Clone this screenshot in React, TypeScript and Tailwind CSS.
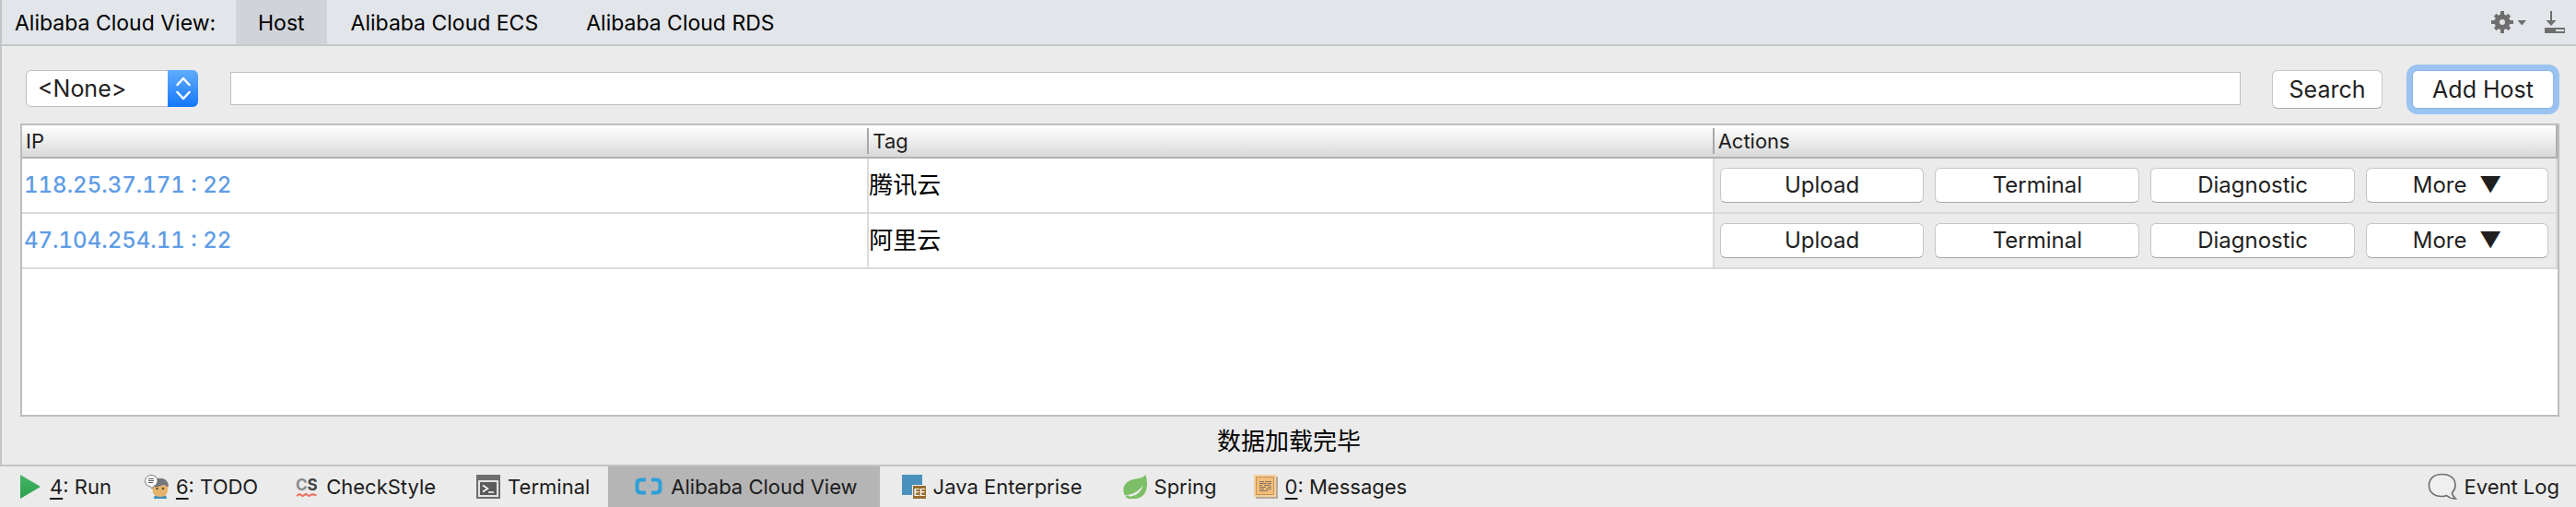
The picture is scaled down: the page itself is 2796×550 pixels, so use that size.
import React from "react";

const hosts = [
  { address: "118.25.37.171 : 22", tag: "腾讯云" },
  { address: "47.104.254.11 : 22", tag: "阿里云" },
];

const actions = ["Upload", "Terminal", "Diagnostic", "More \u00a0▼"];

const tabs = ["Host", "Alibaba Cloud ECS", "Alibaba Cloud RDS"];

function GearIcon() {
  return (
    <svg width="38" height="24" viewBox="0 0 38 24" fill="#6e6e6e" aria-hidden="true">
      <g transform="translate(12 12)">
        {[0, 45, 90, 135].map((angle) => (
          <rect key={angle} x="-2" y={angle % 90 ? "-11" : "-12"} width="4" height={angle % 90 ? "22" : "24"} transform={`rotate(${angle})`} />
        ))}
        <circle r="8.500" />
        <circle r="3" fill="#e2e5ea" />
      </g>
      <path d="M28.500 10h9.500l-4.750 5.500z" />
    </svg>
  );
}

function HideIcon() {
  return (
    <svg width="22" height="24" viewBox="0 0 22 24" fill="#6e6e6e" aria-hidden="true">
      <path d="M6 0h2v10h4.500l-5.500 6-5.500-6H6z" />
      <path fillRule="evenodd" d="M0 18h22v6H0zM12 20v2h9v-2z" />
    </svg>
  );
}

function RunIcon() {
  return (
    <svg width="26" height="26" viewBox="0 0 26 26" aria-hidden="true">
      <defs>
        <linearGradient id="run" x1="0" y1="0" x2="0" y2="1">
          <stop offset="0" stopColor="#43b566" />
          <stop offset="1" stopColor="#2b9f4d" />
        </linearGradient>
      </defs>
      <path d="M2 0L24 13L2 26z" fill="url(#run)" />
    </svg>
  );
}

function TodoIcon() {
  return (
    <svg width="26" height="26" viewBox="0 0 26 26" aria-hidden="true">
      <path d="M10 26c0-3 1.500-4 4-4h6c2.500 0 4 1 4 4z" fill="#3f8fb9" />
      <path d="M8.500 11.500h16.500v5c0 4.500-3 7.500-8 7.500s-8.500-3-8.500-7.500z" fill="#e6b36c" />
      <path d="M12 4.500c7-2.500 14 .5 14 8.500-1.500 0-3-1-4.500-2L12 13.500l-2-2z" fill="#75787a" />
      <circle cx="13.500" cy="15" r="1.200" fill="#5b4a34" />
      <circle cx="20" cy="15" r="1.200" fill="#5b4a34" />
      <path d="M7 .6c4.200 0 7 2.600 7 6 0 3.200-1.500 4.600-4 5.700L8 15l-1.800-2.300C2.600 12.500.6 10 .6 6.600S3.200.6 7 .6z" fill="#fff" stroke="#6e6e6e" />
      <path d="M4 4.500h6M4 6.500h6M4 8.500h5" stroke="#555" />
    </svg>
  );
}

function CheckStyleIcon() {
  return (
    <svg width="26" height="26" viewBox="0 0 26 26" aria-hidden="true">
      <text x="1" y="17" fontSize="17" fontWeight="700" className="font-[Inter]">
        <tspan fill="#8a8a8a">C</tspan>
        <tspan fill="#444">S</tspan>
      </text>
      <path d="M2 23l3-2 3.500 2 3.500-2 3.500 2 3.500-2 4.500 1.500" fill="none" stroke="#ef6d5b" strokeWidth="2" />
    </svg>
  );
}

function TerminalIcon() {
  return (
    <svg width="26" height="26" viewBox="0 0 26 26" aria-hidden="true">
      <path d="M0 0h26v26H0z" fill="#6e6e6e" />
      <path d="M3 7h20v16H3z" fill="#5b5b5b" stroke="#e4e4e4" strokeWidth="2" />
      <path d="M7 11.500l5.500 3.500L7 18.500M13 19h6" fill="none" stroke="#fff" strokeWidth="1.500" />
    </svg>
  );
}

function CloudIcon() {
  return (
    <svg width="32" height="26" viewBox="0 0 32 26" aria-hidden="true" fill="none">
      <path d="M13 5.500H8Q3.500 5.500 3.500 9.500v6q0 4 4.500 4H13M19 5.500h5Q28.500 5.500 28.500 9.500v6q0 4-4.500 4H19" stroke="#2d9fd9" strokeWidth="4" />
      <path d="M14 12.500h4" stroke="#8db4c6" strokeWidth="2" />
    </svg>
  );
}

function JavaEnterpriseIcon() {
  return (
    <svg width="26" height="26" viewBox="0 0 26 26" aria-hidden="true">
      <path d="M0 0h22v22H0z" fill="#4a92bc" />
      <path d="M11 11h15v15H11z" fill="#ececec" />
      <path d="M12 12h14v14H12z" fill="#9a6c2f" />
      <text x="19" y="23" fontSize="11" fontWeight="500" textAnchor="middle" fill="#fff" className="font-[Roboto]">EE</text>
    </svg>
  );
}

function SpringIcon() {
  return (
    <svg width="26" height="26" viewBox="0 0 26 26" aria-hidden="true">
      <path d="M24.500 0C28 12 26 25 13 26c-4 .3-7 0-9-1-5-5-5.500-14 3-18.500C13 3.500 21 5 24.500 0z" fill="#7dbf66" />
      <path d="M2 22.500c8-1 15-4 19.500-11C20 19 14 23.500 3 24.500z" fill="#ececec" />
      <path d="M3 24.500c0-2 2.500-2.500 3.500-1.500s1 2.500 0 2.500z" fill="#7dbf66" />
    </svg>
  );
}

function MessagesIcon() {
  return (
    <svg width="26" height="26" viewBox="0 0 26 26" aria-hidden="true">
      <path d="M2 2h24v24H2z" fill="#b5aa9a" />
      <path d="M0 0h24v24H0z" fill="#f5cf9f" />
      <path d="M2.500 2.500h19v19h-19z" fill="#f4bd78" stroke="#c49355" />
      <path d="M6 7.500h5M12 7.500h7M6 9.500h8M15 9.500h4M6 11.500h3M11 11.500h7M6 13.500h7M15 13.500h4M6 15.500h5M13 15.500h6M6 17.500h9" stroke="#80725e" />
    </svg>
  );
}

function EventLogIcon() {
  return (
    <svg width="32" height="30" viewBox="0 0 32 30" aria-hidden="true">
      <path d="M15.500 1.500c9 0 14.500 4.500 14.500 12 0 3.500-1.500 6-3.500 8 0 2.500 1.500 4.500 4 6.500-4 .3-7-1-10-3.500-1.500.8-3 1-5 1-9 0-14-5-14-12s5-12 14-12z" fill="#efefef" stroke="#6e6e6e" strokeWidth="1.600" />
    </svg>
  );
}

const toolWindows: { icon: React.ReactNode; mnemonic?: string; label: string; pad: string; active?: boolean }[] = [
  { icon: <RunIcon />, mnemonic: "4", label: ": Run", pad: "pl-5 pr-4" },
  { icon: <TodoIcon />, mnemonic: "6", label: ": TODO", pad: "px-5" },
  { icon: <CheckStyleIcon />, label: "CheckStyle", pad: "pl-5 pr-6" },
  { icon: <TerminalIcon />, label: "Terminal", pad: "px-5" },
  { icon: <CloudIcon />, label: "Alibaba Cloud View", pad: "pl-7 pr-6", active: true },
  { icon: <JavaEnterpriseIcon />, label: "Java Enterprise", pad: "px-6" },
  { icon: <SpringIcon />, label: "Spring", pad: "px-5" },
  { icon: <MessagesIcon />, mnemonic: "0", label: ": Messages", pad: "px-5" },
];

const buttonLook = "rounded-md border border-[#c6c6c6] border-b-[#a9a9a9] bg-white text-[#1f1f1f]";

export default function App() {
  return (
    <div className="flex min-h-screen flex-col bg-[#ebebeb] font-['Inter','Noto_Sans_CJK_SC',sans-serif] text-[22px] leading-7 text-[#1c1c1c]">
      <main className="flex flex-1 flex-col border-l-2 border-[#c3c4c6]">
        <header className="flex h-[50px] items-stretch border-b-2 border-[#c4c7ca] bg-[#e2e5ea] text-[23px] text-black">
          <h1 className="flex w-[254px] items-center pt-0.5 pl-3.5">Alibaba Cloud View:</h1>
          <nav className="flex items-stretch">
            {tabs.map((tab, i) => (
              <button key={tab} type="button" className={i === 0 ? "bg-[#d0d3d9] px-6 pt-0.5" : "px-[26px] pt-0.5"}>
                {tab}
              </button>
            ))}
          </nav>
          <div className="ml-auto flex items-center gap-5 pr-3">
            <button type="button" aria-label="Settings"><GearIcon /></button>
            <button type="button" aria-label="Hide"><HideIcon /></button>
          </div>
        </header>

        <form className="flex h-[84px] items-start pt-[26px] pr-6 pl-[26px] text-[25px]" onSubmit={(e) => e.preventDefault()}>
          <div className="relative w-[187px]">
            <select aria-label="Region" className="block h-10 w-full appearance-none rounded-md border border-[#bdbdbd] bg-white pl-3 text-[#1f1f1f]">
              <option>&lt;None&gt;</option>
            </select>
            <span className="pointer-events-none absolute inset-y-0 right-0 flex w-[33px] items-center justify-center rounded-r-md bg-linear-to-b from-[#5fadfb] to-[#0f76fb]">
              <svg width="16" height="26" viewBox="0 0 16 26" fill="none" stroke="#fff" strokeWidth="2.500" strokeLinecap="round" strokeLinejoin="round" aria-hidden="true">
                <path d="M1.500 9L8 2l6.500 7M1.500 17L8 24l6.500-7" />
              </svg>
            </span>
          </div>
          <input aria-label="Search hosts" className="mt-0.5 ml-[35px] h-9 min-w-0 flex-1 border border-[#c0c0c0] bg-white px-2 outline-none" />
          <button type="submit" className={`ml-[34px] h-[42px] w-[120px] ${buttonLook}`}>Search</button>
          <button type="button" className="ml-8 h-[42px] w-[154px] rounded-md border border-[#8bb4e4] bg-white text-[#1f1f1f] ring-6 ring-[#9ac3f2]">Add Host</button>
        </form>

        <section className="mr-[18px] ml-5 flex-1 border-2 border-[#bdbdbd] bg-white">
          <table className="w-full table-fixed border-separate border-spacing-0">
            <thead>
              <tr className="h-9 bg-linear-to-b from-white via-[#ececec] to-[#d6d6d6] text-left">
                {["IP", "Tag", "Actions"].map((name) => (
                  <th key={name} scope="col" className="group border-b-2 border-[#b0b0b0] p-0 font-normal last:border-r-2">
                    <div className="border-l-2 border-[#a8a8a8] pl-1 group-first:border-l-0">{name}</div>
                  </th>
                ))}
              </tr>
            </thead>
            <tbody>
              {hosts.map((host) => (
                <tr key={host.address} className="h-[60px]">
                  <td className="border-b-2 border-[#dadada] p-0 pl-0.5 text-[24px] font-medium tabular-nums">
                    <a href="#host" className="text-[#5e9ce6]">{host.address}</a>
                  </td>
                  <td className="border-b-2 border-l-2 border-[#dadada] p-0 text-[26px] text-black">{host.tag}</td>
                  <td className="border-x-2 border-b-2 border-[#dadada] bg-[#ebebeb] p-0">
                    <div className="flex gap-3 pr-2 pl-1.5 text-[24px]">
                      {actions.map((action) => (
                        <button
                          key={action}
                          type="button"
                          className={`h-[38px] ${action.startsWith("More") ? "flex-[198]" : "flex-[222]"} ${buttonLook}`}
                        >
                          {action}
                        </button>
                      ))}
                    </div>
                  </td>
                </tr>
              ))}
            </tbody>
          </table>
        </section>

        <p role="status" className="flex h-[52px] items-center justify-center pt-0.5 text-[26px] text-black">数据加载完毕</p>
      </main>

      <footer className="flex h-[46px] items-stretch border-t-2 border-[#c3c3c3]">
        {toolWindows.map((tool) => (
          <button
            key={tool.label}
            type="button"
            className={`flex items-center gap-2 ${tool.pad} ${tool.active ? "bg-[#b5b5b5]" : ""}`}
          >
            {tool.icon}
            <span>
              {tool.mnemonic && <u className="decoration-2 underline-offset-4">{tool.mnemonic}</u>}
              {tool.label}
            </span>
          </button>
        ))}
        <button type="button" className="ml-auto flex items-center gap-2 pr-[18px]">
          <EventLogIcon />
          Event Log
        </button>
      </footer>
    </div>
  );
}
